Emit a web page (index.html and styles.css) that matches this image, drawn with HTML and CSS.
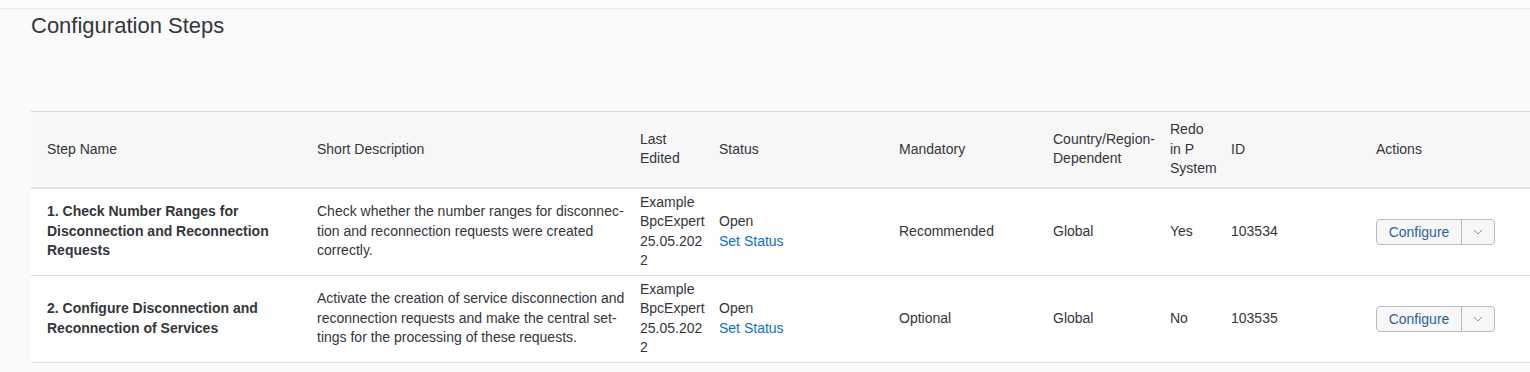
FILE: index.html
```html
<!DOCTYPE html>
<html lang="en">
<head>
<meta charset="utf-8">
<title>Configuration Steps</title>
<link rel="stylesheet" href="styles.css">
</head>
<body>
<div class="topbar"></div>
<main class="page">
  <h1 class="title">Configuration Steps</h1>
  <table class="steps">
    <colgroup>
      <col class="c-name"><col class="c-desc"><col class="c-edit"><col class="c-status"><col class="c-mand"><col class="c-country"><col class="c-redo"><col class="c-id"><col class="c-actions">
    </colgroup>
    <thead>
      <tr>
        <th class="first">Step Name</th>
        <th>Short Description</th>
        <th>Last Edited</th>
        <th>Status</th>
        <th>Mandatory</th>
        <th>Country/Region-Dependent</th>
        <th>Redo in P System</th>
        <th>ID</th>
        <th>Actions</th>
      </tr>
    </thead>
    <tbody>
      <tr>
        <td class="first name">1. Check Number Ranges for Disconnection and Reconnection Requests</td>
        <td class="desc">Check whether the number ranges for disconnec&shy;tion and reconnection requests were created correctly.</td>
        <td class="edit">Example BpcExpert 25.05.2022</td>
        <td>Open<br><a class="link" href="#">Set Status</a></td>
        <td>Recommended</td>
        <td>Global</td>
        <td>Yes</td>
        <td>103534</td>
        <td><div class="split"><button class="split-main">Configure</button><button class="split-arrow" aria-label="More"><svg width="10" height="6" viewBox="0 0 10 6"><path d="M1 1l4 4 4-4" fill="none" stroke="#7d95ae" stroke-width="1"/></svg></button></div></td>
      </tr>
      <tr>
        <td class="first name">2. Configure Disconnection and Reconnection of Services</td>
        <td class="desc">Activate the creation of service disconnection and reconnection requests and make the central set&shy;tings for the processing of these requests.</td>
        <td class="edit">Example BpcExpert 25.05.2022</td>
        <td>Open<br><a class="link" href="#">Set Status</a></td>
        <td>Optional</td>
        <td>Global</td>
        <td>No</td>
        <td>103535</td>
        <td><div class="split"><button class="split-main">Configure</button><button class="split-arrow" aria-label="More"><svg width="10" height="6" viewBox="0 0 10 6"><path d="M1 1l4 4 4-4" fill="none" stroke="#7d95ae" stroke-width="1"/></svg></button></div></td>
      </tr>
    </tbody>
  </table>
</main>
</body>
</html>
```
FILE: styles.css
```css
html, body {
  margin: 0;
  padding: 0;
  background: #fafafa;
  font-family: "Liberation Sans", Arial, sans-serif;
  color: #32363a;
  overflow: hidden;
}

.topbar {
  height: 8px;
  background: #fbfbfb;
  border-bottom: 1px solid #ebebeb;
}

.page {
  padding: 0 0 0 31px;
}

.title {
  margin: 0;
  padding-top: 4px;
  height: 98px;
  font-size: 22px;
  font-weight: normal;
  line-height: 26px;
  color: #32363a;
}

.steps {
  width: 1499px;
  border-collapse: collapse;
  table-layout: fixed;
  font-size: 14px;
  line-height: 19.5px;
}

.c-name { width: 278px; }
.c-desc { width: 323px; }
.c-edit { width: 79px; }
.c-status { width: 180px; }
.c-mand { width: 154px; }
.c-country { width: 117px; }
.c-redo { width: 61px; }
.c-id { width: 145px; }
.c-actions { width: auto; }

.steps thead tr {
  background: #f7f7f7;
  border-top: 1px solid #d5d5d5;
  border-bottom: 2px solid #e3e3e3;
}

.steps th {
  text-align: left;
  font-weight: normal;
  padding: 8px 6px 8px 8px;
  vertical-align: middle;
}

.steps tbody tr {
  background: #ffffff;
  border-bottom: 1px solid #dedede;
}

.steps td {
  padding: 4px 6px 4px 8px;
  vertical-align: middle;
}

.steps .first {
  padding-left: 16px;
}

.steps .desc {
  padding-right: 4px;
}

.name {
  font-weight: bold;
}

.edit {
  overflow-wrap: anywhere;
  word-break: break-all;
}

.link {
  color: #0a6ed1;
  text-decoration: none;
}

.split {
  display: flex;
  width: 117px;
  height: 24px;
  border: 1px solid #b8bcc1;
  border-radius: 4px;
  background: #f7f7f7;
  overflow: hidden;
}

.split button {
  border: none;
  background: transparent;
  font-family: "Liberation Sans", Arial, sans-serif;
  font-size: 14px;
  padding: 0;
  margin: 0;
  display: flex;
  align-items: center;
  justify-content: center;
}

.split-main {
  width: 85px;
  color: #2d6299;
  border-right: 1px solid #b8bcc1 !important;
}

.split-arrow {
  flex: 1;
}
```
